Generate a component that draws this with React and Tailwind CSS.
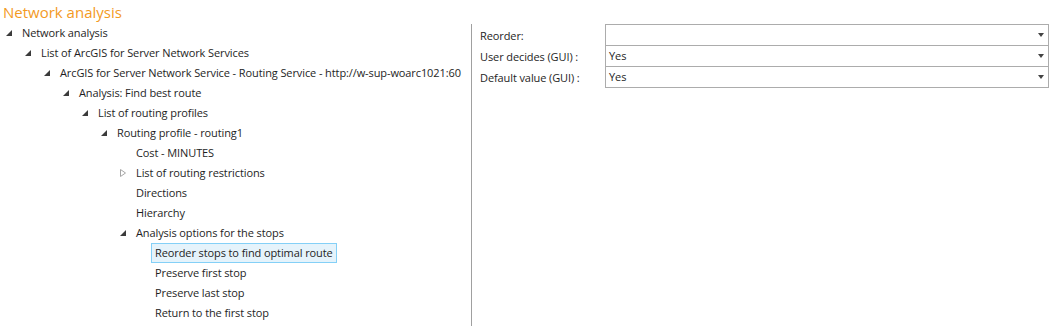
import React from "react";

const nodes = [
  { level: 0, label: "Network analysis", state: "open" },
  { level: 1, label: "List of ArcGIS for Server Network Services", state: "open" },
  { level: 2, label: "ArcGIS for Server Network Service - Routing Service - http://w-sup-woarc1021:60", state: "open" },
  { level: 3, label: "Analysis: Find best route", state: "open" },
  { level: 4, label: "List of routing profiles", state: "open" },
  { level: 5, label: "Routing profile - routing1", state: "open" },
  { level: 6, label: "Cost - MINUTES" },
  { level: 6, label: "List of routing restrictions", state: "closed" },
  { level: 6, label: "Directions" },
  { level: 6, label: "Hierarchy" },
  { level: 6, label: "Analysis options for the stops", state: "open" },
  { level: 7, label: "Reorder stops to find optimal route", selected: true },
  { level: 7, label: "Preserve first stop" },
  { level: 7, label: "Preserve last stop" },
  { level: 7, label: "Return to the first stop" },
];

const fields = [
  { label: "Reorder:", value: "" },
  { label: "User decides (GUI) :", value: "Yes" },
  { label: "Default value (GUI) :", value: "Yes" },
];

const Expander = ({ state }) => {
  if (state === "open") {
    return (
      <svg width="6" height="6" viewBox="0 0 6 6">
        <polygon points="6,0 6,6 0,6" fill="#3b3b3b" />
      </svg>
    );
  }
  if (state === "closed") {
    return (
      <svg width="6" height="8" viewBox="0 0 6 8">
        <polygon points="0.5,0.5 5.5,4 0.5,7.5" fill="none" stroke="#a6a6a6" />
      </svg>
    );
  }
  return null;
};

const TreeRow = ({ node }) => (
  <div className="flex items-center h-5" style={{ paddingLeft: node.level * 19 }}>
    <div className="w-[18px] h-5 flex items-center justify-end pr-[6px]">
      <Expander state={node.state} />
    </div>
    <span
      className={
        "px-[3px] h-5 flex items-center border whitespace-nowrap " +
        (node.selected ? "bg-[#e5f3fb] border-[#84d0f7]" : "border-transparent")
      }
    >
      {node.label}
    </span>
  </div>
);

export default function App() {
  return (
    <div
      className="w-[1052px] h-[326px] bg-white text-[#1e1e1e] text-[11px] tracking-[-0.1px] overflow-hidden"
      style={{ fontFamily: '"Open Sans", "Noto Sans", sans-serif' }}
    >
      <div className="h-[22px] pl-[3px] pt-px text-[15px] leading-[22px] tracking-normal text-[#f39a1f]">
        Network analysis
      </div>
      <div className="flex h-[304px]">
        <div className="w-[471px] pt-px overflow-hidden">
          {nodes.map((n, i) => (
            <TreeRow key={i} node={n} />
          ))}
        </div>
        <div className="w-px bg-[#a0a0a0] mt-[2px]" />
        <div className="flex-1 pt-[2px]">
          {fields.map((f, i) => (
            <div key={i} className="flex h-[21px]">
              <div className="w-[133px] pl-[8px] pt-[3px] flex items-center whitespace-nowrap">{f.label}</div>
              <div
                className={
                  "w-[444px] border-x border-t border-[#acacac] flex items-center justify-between pl-[3px] pr-[4px] " +
                  (i === fields.length - 1 ? "border-b h-[22px]" : "")
                }
              >
                <span className="pt-px">{f.value}</span>
                <svg width="6" height="4" viewBox="0 0 6 4">
                  <polygon points="0,0 6,0 3,4" fill="#444" />
                </svg>
              </div>
            </div>
          ))}
        </div>
      </div>
    </div>
  );
}
